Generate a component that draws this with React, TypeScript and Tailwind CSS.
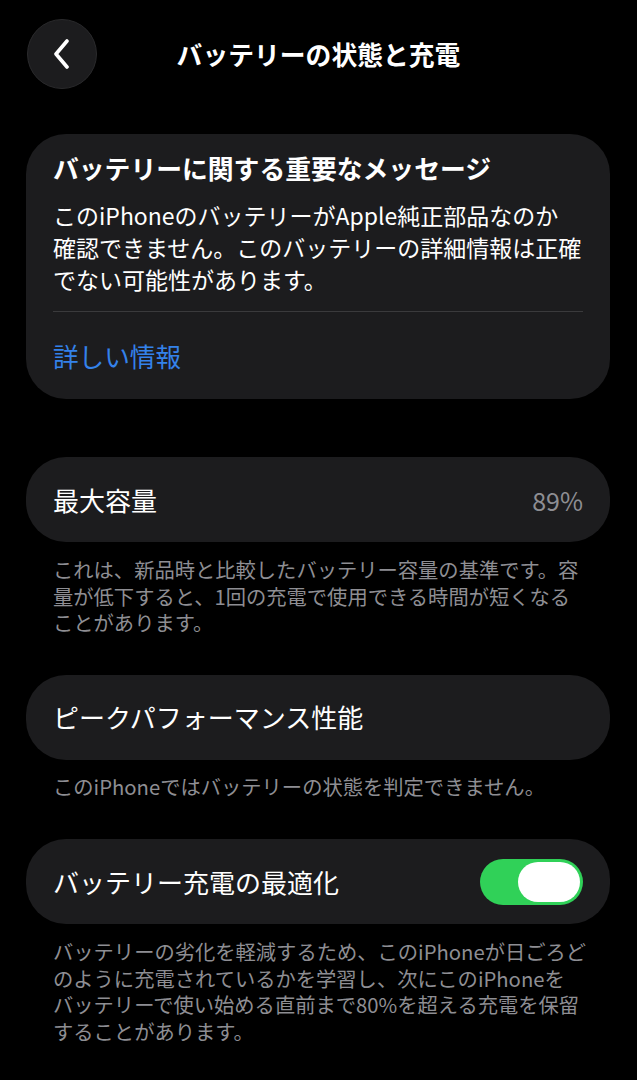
import { Fragment } from "react";

const font = { fontFamily: '"Noto Sans CJK JP", "Noto Sans", sans-serif' };

function Row({ label, children }: { label: string; children?: React.ReactNode }) {
  return (
    <div className="ml-[26px] mr-[27px] flex h-[85px] items-center justify-between rounded-[40px] bg-[#1c1c1e] px-[27px]">
      <span className="whitespace-nowrap text-[26px] leading-[34px] text-white">{label}</span>
      {children}
    </div>
  );
}

function Footer({ lines, className }: { lines: string[]; className: string }) {
  return (
    <p className={`whitespace-nowrap px-[53px] text-[20.3px] leading-[26.5px] text-[#8e8e93] ${className}`}>
      {lines.map((l, i) => (
        <Fragment key={i}>
          {l}
          {i < lines.length - 1 && <br />}
        </Fragment>
      ))}
    </p>
  );
}

export default function App() {
  return (
    <div className="min-h-[1080px] w-[637px] overflow-hidden bg-black pb-10" style={font}>
      {/* Header */}
      <div className="grid grid-cols-[70px_1fr_70px] items-center px-[27px] pt-[19px]">
        <button className="flex h-[70px] w-[70px] items-center justify-center rounded-full border border-[#2a2a2c] bg-[#1c1c1e]">
          <svg width="18" height="30" viewBox="0 0 18 30" fill="none">
            <path d="M14 2L3 15l11 13" stroke="white" strokeWidth="3.6" strokeLinecap="round" strokeLinejoin="round" />
          </svg>
        </button>
        <h1 className="text-center text-[25.8px] font-semibold leading-[34px] text-white">
          バッテリーの状態と充電
        </h1>
        <div />
      </div>

      {/* Important message card */}
      <div className="ml-[26px] mr-[27px] mt-[45px] rounded-[40px] bg-[#1c1c1e] px-[27px] pb-[27px] pt-[17px]">
        <h2 className="whitespace-nowrap text-[25.8px] font-semibold leading-[34px] text-white">
          バッテリーに関する重要なメッセージ
        </h2>
        <p className="mt-[14px] whitespace-nowrap text-[23px] leading-[32px] text-white">
          このiPhoneのバッテリーがApple純正部品なのか
          <br />
          確認できません。このバッテリーの詳細情報は正確
          <br />
          でない可能性があります。
        </p>
        <div className="mt-[16px] h-px bg-[#3a3a3c]" />
        <a className="mt-[28px] block text-[25.6px] leading-[32px] text-[#3482ea]">詳しい情報</a>
      </div>

      {/* Max capacity */}
      <div className="mt-[58px]">
        <Row label="最大容量">
          <span className="text-[25px] leading-[34px] text-[#8e8e93]">89%</span>
        </Row>
      </div>
      <Footer
        className="mt-[14px]"
        lines={[
          "これは、新品時と比較したバッテリー容量の基準です。容",
          "量が低下すると、1回の充電で使用できる時間が短くなる",
          "ことがあります。",
        ]}
      />

      {/* Peak performance */}
      <div className="mt-[39px]">
        <Row label="ピークパフォーマンス性能" />
      </div>
      <Footer className="mt-[13px]" lines={["このiPhoneではバッテリーの状態を判定できません。"]} />

      {/* Optimized charging */}
      <div className="mt-[40px]">
        <Row label="バッテリー充電の最適化">
          <div className="flex h-[46px] w-[103px] items-center justify-end rounded-full bg-[#30d158] px-[3px]">
            <div className="h-[40px] w-[62px] rounded-full bg-white" />
          </div>
        </Row>
      </div>
      <Footer
        className="mt-[14px]"
        lines={[
          "バッテリーの劣化を軽減するため、このiPhoneが日ごろど",
          "のように充電されているかを学習し、次にこのiPhoneを",
          "バッテリーで使い始める直前まで80%を超える充電を保留",
          "することがあります。",
        ]}
      />
    </div>
  );
}
